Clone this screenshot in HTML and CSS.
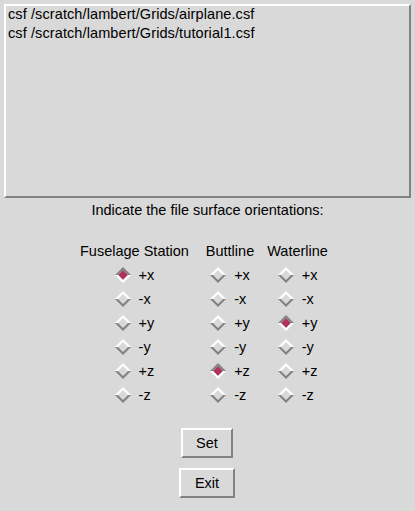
FILE: index.html
```html
<!DOCTYPE html>
<html>
<head>
<meta charset="utf-8">
<link rel="stylesheet" href="styles.css">
</head>
<body>
<div class="listbox">
  <div class="items">
    <div class="item">csf /scratch/lambert/Grids/airplane.csf</div>
    <div class="item">csf /scratch/lambert/Grids/tutorial1.csf</div>
  </div>
</div>
<div class="prompt">Indicate the file surface orientations:</div>
<div class="groups">
  <div class="group g1">
    <div class="head">Fuselage Station</div>
    <div class="opts">
      <div class="opt"><svg class="dia on" viewBox="0 0 16 16"><polygon class="fill" points="8,3 13,8 8,13 3,8"/><polygon class="top" points="0,8 8,0 16,8 13,8 8,3 3,8"/><polygon class="bot" points="0,8 8,16 16,8 13,8 8,13 3,8"/></svg><span>+x</span></div>
      <div class="opt"><svg class="dia" viewBox="0 0 16 16"><polygon class="top" points="0,8 8,0 16,8 13,8 8,3 3,8"/><polygon class="bot" points="0,8 8,16 16,8 13,8 8,13 3,8"/></svg><span>-x</span></div>
      <div class="opt"><svg class="dia" viewBox="0 0 16 16"><polygon class="top" points="0,8 8,0 16,8 13,8 8,3 3,8"/><polygon class="bot" points="0,8 8,16 16,8 13,8 8,13 3,8"/></svg><span>+y</span></div>
      <div class="opt"><svg class="dia" viewBox="0 0 16 16"><polygon class="top" points="0,8 8,0 16,8 13,8 8,3 3,8"/><polygon class="bot" points="0,8 8,16 16,8 13,8 8,13 3,8"/></svg><span>-y</span></div>
      <div class="opt"><svg class="dia" viewBox="0 0 16 16"><polygon class="top" points="0,8 8,0 16,8 13,8 8,3 3,8"/><polygon class="bot" points="0,8 8,16 16,8 13,8 8,13 3,8"/></svg><span>+z</span></div>
      <div class="opt"><svg class="dia" viewBox="0 0 16 16"><polygon class="top" points="0,8 8,0 16,8 13,8 8,3 3,8"/><polygon class="bot" points="0,8 8,16 16,8 13,8 8,13 3,8"/></svg><span>-z</span></div>
    </div>
  </div>
  <div class="group g2">
    <div class="head">Buttline</div>
    <div class="opts">
      <div class="opt"><svg class="dia" viewBox="0 0 16 16"><polygon class="top" points="0,8 8,0 16,8 13,8 8,3 3,8"/><polygon class="bot" points="0,8 8,16 16,8 13,8 8,13 3,8"/></svg><span>+x</span></div>
      <div class="opt"><svg class="dia" viewBox="0 0 16 16"><polygon class="top" points="0,8 8,0 16,8 13,8 8,3 3,8"/><polygon class="bot" points="0,8 8,16 16,8 13,8 8,13 3,8"/></svg><span>-x</span></div>
      <div class="opt"><svg class="dia" viewBox="0 0 16 16"><polygon class="top" points="0,8 8,0 16,8 13,8 8,3 3,8"/><polygon class="bot" points="0,8 8,16 16,8 13,8 8,13 3,8"/></svg><span>+y</span></div>
      <div class="opt"><svg class="dia" viewBox="0 0 16 16"><polygon class="top" points="0,8 8,0 16,8 13,8 8,3 3,8"/><polygon class="bot" points="0,8 8,16 16,8 13,8 8,13 3,8"/></svg><span>-y</span></div>
      <div class="opt"><svg class="dia on" viewBox="0 0 16 16"><polygon class="fill" points="8,3 13,8 8,13 3,8"/><polygon class="top" points="0,8 8,0 16,8 13,8 8,3 3,8"/><polygon class="bot" points="0,8 8,16 16,8 13,8 8,13 3,8"/></svg><span>+z</span></div>
      <div class="opt"><svg class="dia" viewBox="0 0 16 16"><polygon class="top" points="0,8 8,0 16,8 13,8 8,3 3,8"/><polygon class="bot" points="0,8 8,16 16,8 13,8 8,13 3,8"/></svg><span>-z</span></div>
    </div>
  </div>
  <div class="group g3">
    <div class="head">Waterline</div>
    <div class="opts">
      <div class="opt"><svg class="dia" viewBox="0 0 16 16"><polygon class="top" points="0,8 8,0 16,8 13,8 8,3 3,8"/><polygon class="bot" points="0,8 8,16 16,8 13,8 8,13 3,8"/></svg><span>+x</span></div>
      <div class="opt"><svg class="dia" viewBox="0 0 16 16"><polygon class="top" points="0,8 8,0 16,8 13,8 8,3 3,8"/><polygon class="bot" points="0,8 8,16 16,8 13,8 8,13 3,8"/></svg><span>-x</span></div>
      <div class="opt"><svg class="dia on" viewBox="0 0 16 16"><polygon class="fill" points="8,3 13,8 8,13 3,8"/><polygon class="top" points="0,8 8,0 16,8 13,8 8,3 3,8"/><polygon class="bot" points="0,8 8,16 16,8 13,8 8,13 3,8"/></svg><span>+y</span></div>
      <div class="opt"><svg class="dia" viewBox="0 0 16 16"><polygon class="top" points="0,8 8,0 16,8 13,8 8,3 3,8"/><polygon class="bot" points="0,8 8,16 16,8 13,8 8,13 3,8"/></svg><span>-y</span></div>
      <div class="opt"><svg class="dia" viewBox="0 0 16 16"><polygon class="top" points="0,8 8,0 16,8 13,8 8,3 3,8"/><polygon class="bot" points="0,8 8,16 16,8 13,8 8,13 3,8"/></svg><span>+z</span></div>
      <div class="opt"><svg class="dia" viewBox="0 0 16 16"><polygon class="top" points="0,8 8,0 16,8 13,8 8,3 3,8"/><polygon class="bot" points="0,8 8,16 16,8 13,8 8,13 3,8"/></svg><span>-z</span></div>
    </div>
  </div>
</div>
<div class="buttons">
  <div class="btn">Set</div>
  <div class="btn">Exit</div>
</div>
</body>
</html>
```

FILE: styles.css
```css
html, body {
  margin: 0;
  padding: 0;
  background: #d9d9d9;
  width: 415px;
  height: 511px;
  overflow: hidden;
  font-family: "Liberation Sans", Arial, sans-serif;
  font-size: 14.5px;
  color: #000;
}
.listbox {
  margin: 4px 4px 0 4px;
  height: 190px;
  border: 2px solid;
  border-color: #ffffff #828282 #828282 #ffffff;
  overflow: hidden;
}
.items {
  margin-top: -1px;
  padding-left: 2px;
}
.item {
  line-height: 19px;
  white-space: nowrap;
  letter-spacing: 0.1px;
}
.prompt {
  margin-top: 4px;
  text-align: center;
  line-height: 16px;
}
.groups {
  display: flex;
  margin-top: 25px;
  padding-left: 80px;
}
.group {
  display: flex;
  flex-direction: column;
  align-items: center;
}
.g2 { margin-left: 17px; }
.g3 { margin-left: 13px; }
.head {
  line-height: 16px;
  white-space: nowrap;
}
.opts {
  margin-top: 4px;
  display: flex;
  flex-direction: column;
}
.opt {
  height: 24px;
  display: flex;
  align-items: center;
}
.opt span {
  margin-left: 8px;
  line-height: 16px;
}
.dia {
  width: 16px;
  height: 16px;
  display: block;
}
.dia .top { fill: #ffffff; }
.dia .bot { fill: #828282; }
.dia.on .top { fill: #828282; }
.dia.on .bot { fill: #ffffff; }
.dia .fill { fill: #b03060; }
.buttons {
  margin-top: 21px;
  display: flex;
  flex-direction: column;
  align-items: center;
  gap: 10px;
  padding-right: 1px;
}
.btn {
  height: 26px;
  line-height: 26px;
  padding: 0 13.5px;
  border: 2px solid;
  border-color: #ffffff #828282 #828282 #ffffff;
}
```
